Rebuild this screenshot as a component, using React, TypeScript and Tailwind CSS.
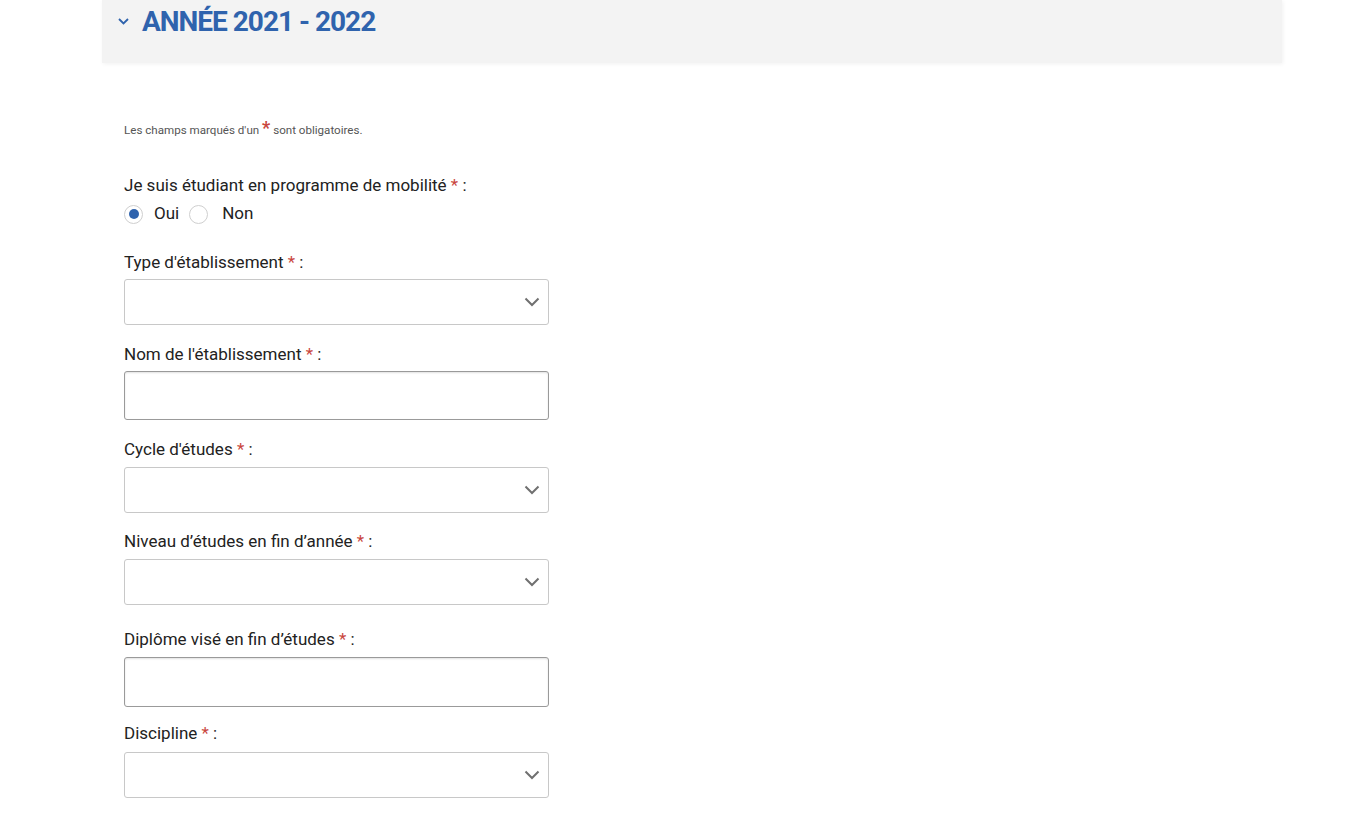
import React from 'react';

const Star = () => <span className="text-[#c9463d]">*</span>;

const Chevron = () => (
    <svg width="16" height="10" viewBox="0 0 16 10" className="shrink-0">
        <polyline points="1.5,1.5 8,8 14.5,1.5" fill="none" stroke="#707070" strokeWidth="2" />
    </svg>
);

type FieldProps = {
    label: string;
    kind: 'select' | 'input';
    gap: string;
    boxGap: string;
    h: string;
};

const Field: React.FC<FieldProps> = ({ label, kind, gap, boxGap, h }) => (
    <div className={gap}>
        <div className="text-[17px] leading-[20px] text-[#222]">
            {label} <Star /> :
        </div>
        {kind === 'select' ? (
            <div className={`${boxGap} ${h} w-[425px] rounded-[3px] border border-[#c8c8c8] bg-white flex items-center justify-end pr-[8px]`}>
                <Chevron />
            </div>
        ) : (
            <div className={`${boxGap} ${h} w-[425px] rounded-[3px] border border-[#9a9a9a] bg-white shadow-[inset_0_1px_2px_rgba(0,0,0,0.12)]`} />
        )}
    </div>
);

const App: React.FC = () => {
    return (
        <div className="min-h-[820px] bg-white font-['Roboto','Liberation_Sans',sans-serif]">
            {/* Section header */}
            <div className="ml-[102px] w-[1180px] h-[63px] bg-[#f3f3f3] shadow-[1px_1px_4px_rgba(0,0,0,0.06)] flex items-start pt-[6px] pl-[16px] gap-[13px]">
                <svg width="11" height="7" viewBox="0 0 11 7" className="mt-[12px]">
                    <polyline points="1,1 5.5,5.5 10,1" fill="none" stroke="#2f63ad" strokeWidth="1.8" />
                </svg>
                <h2 className="text-[28px] leading-[32px] font-bold tracking-[-1px] text-[#2f63ad]">ANNÉE 2021 - 2022</h2>
            </div>

            {/* Form */}
            <div className="pl-[124px]">
                <p className="mt-[59px] text-[11.6px] leading-[16px] text-[#555]">
                    Les champs marqués d'un <span className="text-[18px] leading-[10px] font-bold text-[#c9463d]">*</span> sont obligatoires.
                </p>

                <div className="mt-[37px] text-[17px] leading-[20px] text-[#222]">
                    Je suis étudiant en programme de mobilité <Star /> :
                </div>
                <div className="mt-[9px] flex items-center h-[20px] text-[17px] text-[#222]">
                    <span className="w-[19px] h-[19px] rounded-full border border-[#cfcfcf] flex items-center justify-center">
                        <span className="w-[10px] h-[10px] rounded-full bg-[#2f63ad]" />
                    </span>
                    <span className="ml-[11px]">Oui</span>
                    <span className="ml-[10px] w-[19px] h-[19px] rounded-full border border-[#cfcfcf]" />
                    <span className="ml-[14px]">Non</span>
                </div>

                <Field label="Type d'établissement" kind="select" gap="mt-[28px]" boxGap="mt-[7px]" h="h-[46px]" />
                <Field label="Nom de l'établissement" kind="input" gap="mt-[19px]" boxGap="mt-[7px]" h="h-[49px]" />
                <Field label="Cycle d'études" kind="select" gap="mt-[19px]" boxGap="mt-[8px]" h="h-[46px]" />
                <Field label="Niveau d’études en fin d’année" kind="select" gap="mt-[18px]" boxGap="mt-[8px]" h="h-[46px]" />
                <Field label="Diplôme visé en fin d’études" kind="input" gap="mt-[24px]" boxGap="mt-[8px]" h="h-[50px]" />
                <Field label="Discipline" kind="select" gap="mt-[16px]" boxGap="mt-[9px]" h="h-[46px]" />
            </div>
        </div>
    );
};

export default App;
